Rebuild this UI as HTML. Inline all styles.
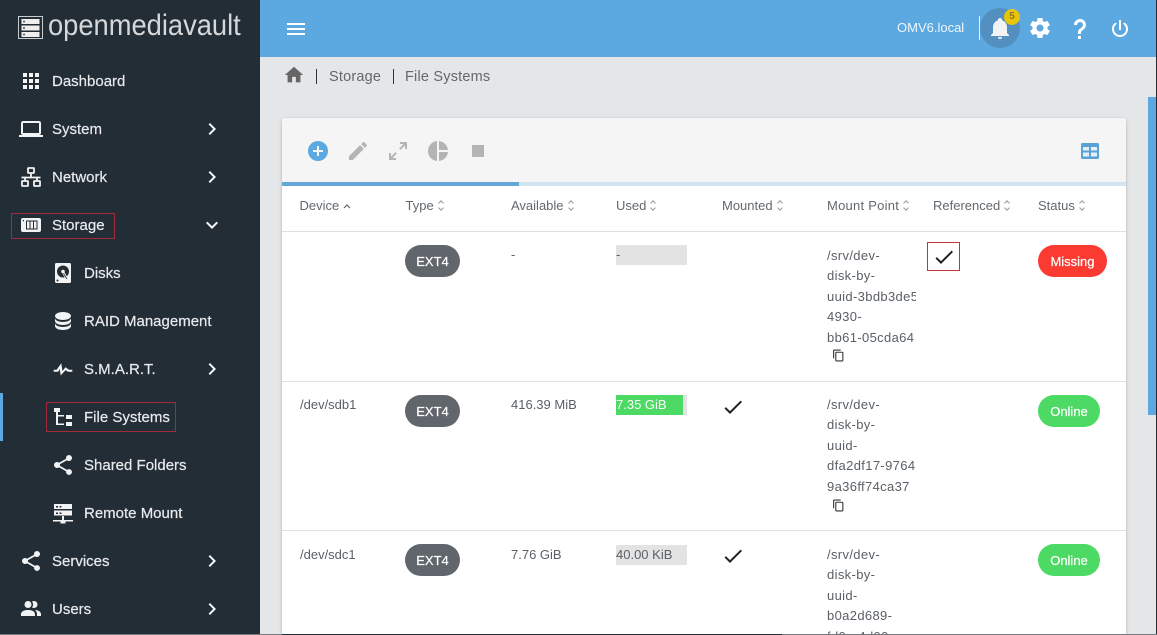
<!DOCTYPE html>
<html><head><meta charset="utf-8"><style>
html,body{margin:0;padding:0;width:1157px;height:635px;overflow:hidden;background:#e4e6e8;font-family:"Liberation Sans",sans-serif}
.a{position:absolute}
#r{position:relative;width:1157px;height:635px;overflow:hidden}
.n{position:absolute;color:#e8eaec;font-size:15px;line-height:20px;margin-top:1px;white-space:nowrap;-webkit-text-stroke:.2px #e8eaec}
svg{position:absolute;display:block}
.w{fill:#f2f3f4}
.g{fill:#b4b4b4}
.h{position:absolute;top:197px;font-size:13px;line-height:18px;color:#62686d;white-space:nowrap}
.h i{display:inline-block;width:6px;height:11px;margin-left:4px;vertical-align:-1px;position:relative}
.h i:before,.h i:after{content:"";position:absolute;left:1px;width:3px;height:3px;border-left:1px solid #999;border-top:1px solid #999}
.h i:before{top:1px;transform:rotate(45deg)}
.h i:after{bottom:1px;transform:rotate(225deg)}
.t{position:absolute;font-size:13px;line-height:20px;color:#5a6066;white-space:nowrap}
.p{position:absolute;height:32px;line-height:33px;border-radius:16px;color:#fff;font-size:13px;text-align:center;-webkit-text-stroke:.2px #fff}
.x{left:405px;width:55px;background:#60666c}
.b{position:absolute;left:616px;width:71px;height:20px;background:#e3e3e3}
.m{position:absolute;left:827px;width:89px;overflow:hidden;font-size:13px;line-height:20.4px;letter-spacing:.35px;color:#5a6066;white-space:nowrap}
.bx{position:absolute;border:1px solid #a32a3a;box-sizing:border-box}
</style></head><body><div id="r">
<div class="a" style="left:0;top:0;width:260px;height:634px;background:#232d36"></div>
<div class="a" style="left:260px;top:0;width:897px;height:57px;background:#5ba9e0"></div>
<div class="a" style="left:0;top:393px;width:3px;height:48px;background:#5ba9e0"></div>

<div class="a" style="left:18px;top:16px;width:25px;height:23px;border:1px solid #c8cccf;box-sizing:border-box"></div>
<svg style="left:18px;top:16px" width="25" height="23"><rect x="3.500" y="3" width="18" height="5" fill="#eee"/><rect x="3.500" y="9.500" width="18" height="5" fill="#eee"/><rect x="3.500" y="16" width="18" height="5" fill="#eee"/><circle cx="6" cy="5.500" r="1" fill="#555"/><circle cx="6" cy="12" r="1" fill="#555"/><circle cx="6" cy="18.500" r="1" fill="#555"/></svg>
<div class="a" style="left:48px;top:10px;font-size:30px;line-height:32px;color:#d5d8da;white-space:nowrap;transform:scaleX(.91);transform-origin:0 0">openmediavault</div>

<svg style="left:19px;top:69px" width="24" height="24" viewBox="0 0 24 24"><path class="w" d="M16,20H20V16H16M16,14H20V10H16M10,8H14V4H10M16,8H20V4H16M10,14H14V10H10M4,14H8V10H4M4,20H8V16H4M10,20H14V16H10M4,8H8V4H4V8Z"/></svg>
<div class="n" style="left:52px;top:71px">Dashboard</div>
<svg style="left:19px;top:117px" width="24" height="24" viewBox="0 0 24 24"><path class="w" d="M4,6H20V16H4M20,18A2,2 0 0,0 22,16V6C22,4.890 21.100,4 20,4H4C2.890,4 2,4.890 2,6V16A2,2 0 0,0 4,18H0V20H24V18H20Z"/></svg>
<div class="n" style="left:52px;top:119px">System</div>
<svg style="left:21px;top:167px" width="20" height="20" viewBox="0 0 20 20" fill="none" stroke="#f2f3f4" stroke-width="1.800"><rect x="7" y="1" width="6" height="5" rx=".5"/><rect x="1" y="14" width="6" height="5" rx=".5"/><rect x="13" y="14" width="6" height="5" rx=".5"/><path d="M10 6V10M0.500 10.500H19.500M4 10.500V14M16 10.500V14"/></svg>
<div class="n" style="left:52px;top:167px">Network</div>
<svg style="left:21px;top:218px" width="20" height="14" viewBox="0 0 20 14"><path class="w" d="M2 0H18A2 2 0 0 1 20 2V12A2 2 0 0 1 18 14H2A2 2 0 0 1 0 12V2A2 2 0 0 1 2 0Z"/><path fill="#232d36" d="M5 2.500H16.500V11.500H5ZM1.800 2H3V3.200H1.800Z"/><path class="w" d="M6 3.500H8.500V10.500H6ZM9.500 3.500H12V10.500H9.500ZM13 3.500H15.500V10.500H13Z"/></svg>
<div class="n" style="left:52px;top:215px">Storage</div>
<svg style="left:55px;top:263px" width="16" height="20" viewBox="0 0 16 20"><rect width="16" height="20" rx="1.500" class="w"/><circle cx="8" cy="8.500" r="6" fill="#232d36"/><circle cx="8" cy="8.500" r="1.800" fill="#f2f3f4"/><path d="M8.500 10L12 16" stroke="#f2f3f4" stroke-width="2.400"/><path d="M8.500 10.500L12 16" stroke="#232d36" stroke-width=".8"/><circle cx="2.500" cy="17.500" r="1" fill="#232d36"/></svg>
<div class="n" style="left:84px;top:263px">Disks</div>
<svg style="left:51px;top:309px" width="24" height="24" viewBox="0 0 24 24"><path class="w" d="M12,3C7.580,3 4,4.790 4,7C4,9.210 7.580,11 12,11C16.420,11 20,9.210 20,7C20,4.790 16.420,3 12,3M4,9V12C4,14.210 7.580,16 12,16C16.420,16 20,14.210 20,12V9C20,11.210 16.420,13 12,13C7.580,13 4,11.210 4,9M4,14V17C4,19.210 7.580,21 12,21C16.420,21 20,19.210 20,17V14C20,16.210 16.420,18 12,18C7.580,18 4,16.210 4,14Z"/></svg>
<div class="n" style="left:84px;top:311px">RAID Management</div>
<svg style="left:51px;top:357px" width="24" height="24" viewBox="0 0 24 24"><path class="w" stroke="#f2f3f4" stroke-width=".6" d="M3,13H5.790L10.100,7L11.280,14.750L14.500,10.660L17.830,13H21V14.500H17L14.670,12.670L9.920,17.730L8.940,11.310L7,14.500H3V13Z"/></svg>
<div class="n" style="left:84px;top:359px">S.M.A.R.T.</div>
<svg style="left:54px;top:408px" width="18" height="18" viewBox="0 0 18 18"><path class="w" d="M0 0H6V4H0ZM12 7H18V11H12ZM12 14H18V18H12Z"/><path class="w" d="M2 4H4V7H10V8.500H4V15.500H10V17H2Z"/></svg>
<div class="n" style="left:84px;top:407px">File Systems</div>
<svg style="left:51px;top:453px" width="24" height="24" viewBox="0 0 24 24"><path class="w" d="M18,16.080C17.240,16.080 16.560,16.380 16.040,16.850L8.910,12.700C8.960,12.470 9,12.240 9,12C9,11.760 8.960,11.530 8.910,11.300L15.960,7.190C16.500,7.690 17.210,8 18,8A3,3 0 0,0 21,5A3,3 0 0,0 18,2A3,3 0 0,0 15,5C15,5.240 15.040,5.470 15.090,5.700L8.040,9.810C7.500,9.310 6.790,9 6,9A3,3 0 0,0 3,12A3,3 0 0,0 6,15C6.790,15 7.500,14.690 8.040,14.190L15.160,18.340C15.110,18.550 15.080,18.770 15.080,19C15.080,20.610 16.390,21.910 18,21.910C19.610,21.910 20.920,20.610 20.920,19A2.920,2.920 0 0,0 18,16.080Z"/></svg>
<div class="n" style="left:84px;top:455px">Shared Folders</div>
<svg style="left:53px;top:504px" width="20" height="20" viewBox="0 0 20 20"><path class="w" d="M1 0H19V5H1ZM1 6.500H19V11.500H1ZM9 12H11V16H20V17.500H12.500V19.500H7.500V17.500H0V16H9Z"/><path fill="#232d36" d="M3 2H5V3.500H3ZM6.500 2H8.500V3.500H6.500ZM3 8.500H5V10H3ZM6.500 8.500H8.500V10H6.500Z"/></svg>
<div class="n" style="left:84px;top:503px">Remote Mount</div>
<svg style="left:19px;top:549px" width="24" height="24" viewBox="0 0 24 24"><path class="w" d="M18,16.080C17.240,16.080 16.560,16.380 16.040,16.850L8.910,12.700C8.960,12.470 9,12.240 9,12C9,11.760 8.960,11.530 8.910,11.300L15.960,7.190C16.500,7.690 17.210,8 18,8A3,3 0 0,0 21,5A3,3 0 0,0 18,2A3,3 0 0,0 15,5C15,5.240 15.040,5.470 15.090,5.700L8.040,9.810C7.500,9.310 6.790,9 6,9A3,3 0 0,0 3,12A3,3 0 0,0 6,15C6.790,15 7.500,14.690 8.040,14.190L15.160,18.340C15.110,18.550 15.080,18.770 15.080,19C15.080,20.610 16.390,21.910 18,21.910C19.610,21.910 20.920,20.610 20.920,19A2.920,2.920 0 0,0 18,16.080Z"/></svg>
<div class="n" style="left:52px;top:551px">Services</div>
<svg style="left:19px;top:597px" width="24" height="24" viewBox="0 0 24 24"><path class="w" d="M16 17V19H2V17S2 13 9 13 16 17 16 17M12.500 7.500A3.500 3.500 0 1 0 9 11A3.500 3.500 0 0 0 12.500 7.500M15.940 13A5.320 5.320 0 0 1 18 17V19H22V17S22 13.370 15.940 13M15 4A3.390 3.390 0 0 0 13.070 4.590A5 5 0 0 1 13.070 10.410A3.390 3.390 0 0 0 15 11A3.500 3.500 0 0 0 15 4Z"/></svg>
<div class="n" style="left:52px;top:599px">Users</div>
<svg style="left:200px;top:117px" width="24" height="24" viewBox="0 0 24 24"><path class="w" d="M8.590,16.580L13.170,12L8.590,7.410L10,6L16,12L10,18L8.590,16.580Z"/></svg>
<svg style="left:200px;top:165px" width="24" height="24" viewBox="0 0 24 24"><path class="w" d="M8.590,16.580L13.170,12L8.590,7.410L10,6L16,12L10,18L8.590,16.580Z"/></svg>
<svg style="left:200px;top:213px" width="24" height="24" viewBox="0 0 24 24"><path class="w" d="M7.410,8.580L12,13.170L16.590,8.580L18,10L12,16L6,10L7.410,8.580Z"/></svg>
<svg style="left:200px;top:357px" width="24" height="24" viewBox="0 0 24 24"><path class="w" d="M8.590,16.580L13.170,12L8.590,7.410L10,6L16,12L10,18L8.590,16.580Z"/></svg>
<svg style="left:200px;top:549px" width="24" height="24" viewBox="0 0 24 24"><path class="w" d="M8.590,16.580L13.170,12L8.590,7.410L10,6L16,12L10,18L8.590,16.580Z"/></svg>
<svg style="left:200px;top:597px" width="24" height="24" viewBox="0 0 24 24"><path class="w" d="M8.590,16.580L13.170,12L8.590,7.410L10,6L16,12L10,18L8.590,16.580Z"/></svg>
<div class="bx" style="left:11px;top:213px;width:104px;height:26px"></div>
<div class="bx" style="left:46px;top:402px;width:130px;height:30px"></div>

<svg style="left:287px;top:23px" width="18" height="13"><path fill="#fff" d="M0 0H18V2H0ZM0 5H18V7H0ZM0 10H18V12H0Z"/></svg>
<div class="a" style="left:897px;top:18px;font-size:13px;line-height:20px;color:#f0f6fb;white-space:nowrap">OMV6.local</div>
<div class="a" style="left:979px;top:16px;width:1px;height:24px;background:#e6f1f9"></div>
<div class="a" style="left:980px;top:8px;width:40px;height:40px;border-radius:50%;background:#5390bf"></div>
<svg style="left:988px;top:16px" width="24" height="24" viewBox="0 0 24 24"><path fill="#f0f2f4" d="M21,19V20H3V19L5,17V11C5,7.900 7.030,5.170 10,4.290C10,4.190 10,4.100 10,4A2,2 0 0,1 12,2A2,2 0 0,1 14,4C14,4.100 14,4.190 14,4.290C16.970,5.170 19,7.900 19,11V17L21,19M14,21A2,2 0 0,1 12,23A2,2 0 0,1 10,21"/></svg>
<div class="a" style="left:1004px;top:9px;width:16px;height:16px;border-radius:50%;background:#e8c40c;color:#8c7a14;font-size:10px;font-weight:bold;line-height:16px;text-align:center">5</div>
<svg style="left:1028px;top:16px" width="24" height="24" viewBox="0 0 24 24"><path fill="#fff" d="M12,15.500A3.500,3.500 0 0,1 8.500,12A3.500,3.500 0 0,1 12,8.500A3.500,3.500 0 0,1 15.500,12A3.500,3.500 0 0,1 12,15.500M19.430,12.970C19.470,12.650 19.500,12.330 19.500,12C19.500,11.670 19.470,11.340 19.430,11L21.540,9.370C21.730,9.220 21.780,8.950 21.660,8.730L19.660,5.270C19.540,5.050 19.270,4.960 19.050,5.050L16.560,6.050C16.040,5.660 15.500,5.320 14.870,5.070L14.500,2.420C14.460,2.180 14.250,2 14,2H10C9.750,2 9.540,2.180 9.500,2.420L9.130,5.070C8.500,5.320 7.960,5.660 7.440,6.050L4.950,5.050C4.730,4.960 4.460,5.050 4.340,5.270L2.340,8.730C2.210,8.950 2.270,9.220 2.460,9.370L4.570,11C4.530,11.340 4.500,11.670 4.500,12C4.500,12.330 4.530,12.650 4.570,12.970L2.460,14.630C2.270,14.780 2.210,15.050 2.340,15.270L4.340,18.730C4.460,18.950 4.730,19.030 4.950,18.950L7.440,17.940C7.960,18.340 8.500,18.680 9.130,18.930L9.500,21.580C9.540,21.820 9.750,22 10,22H14C14.250,22 14.460,21.820 14.500,21.580L14.870,18.930C15.500,18.670 16.040,18.340 16.560,17.940L19.050,18.950C19.270,19.030 19.540,18.950 19.660,18.730L21.660,15.270C21.780,15.050 21.730,14.780 21.540,14.630L19.430,12.970Z"/></svg>
<svg style="left:1068px;top:17px" width="24" height="24" viewBox="0 0 24 24"><path fill="#fff" d="M10,19H13V22H10V19M12,2C17.350,2.220 19.680,7.620 16.500,11.670C15.670,12.670 14.330,13.330 13.670,14.170C13,15 13,16 13,17H10C10,15.330 10,13.920 10.670,12.920C11.330,11.920 12.670,11.330 13.500,10.670C15.920,8.430 15.320,5.260 12,5A3,3 0 0,0 9,8H6A6,6 0 0,1 12,2Z"/></svg>
<svg style="left:1108px;top:17px" width="24" height="24" viewBox="0 0 24 24"><path fill="#fff" d="M16.560,5.440L15.110,6.890C16.840,7.940 18,9.830 18,12A6,6 0 0,1 12,18A6,6 0 0,1 6,12C6,9.830 7.160,7.940 8.880,6.880L7.440,5.440C5.360,6.880 4,9.280 4,12A8,8 0 0,0 12,20A8,8 0 0,0 20,12C20,9.280 18.640,6.880 16.560,5.440M13,3H11V13H13"/></svg>

<svg style="left:283px;top:64px" width="22" height="22" viewBox="0 0 24 24"><path fill="#666" d="M10,20V14H14V20H19V12H22L12,3L2,12H5V20H10Z"/></svg>
<div class="a" style="left:316px;top:69px;width:1px;height:15px;background:#333"></div>
<div class="a" style="left:393px;top:69px;width:1px;height:15px;background:#333"></div>
<div class="a" style="left:329px;top:67px;font-size:14.5px;line-height:20px;color:#62686d;letter-spacing:.2px;white-space:nowrap">Storage</div>
<div class="a" style="left:405px;top:67px;font-size:14.5px;line-height:20px;color:#62686d;letter-spacing:.2px;white-space:nowrap">File Systems</div>

<div class="a" style="left:1148px;top:97px;width:8px;height:318px;background:#5ba9e0"></div>
<div class="a" style="left:1156px;top:0;width:1px;height:635px;background:#232d36"></div>

<div class="a" style="left:282px;top:118px;width:844px;height:516px;background:#fff;border-radius:3px 3px 0 0;box-shadow:0 1px 3px rgba(0,0,0,.25)"></div>
<div class="a" style="left:282px;top:118px;width:844px;height:64px;background:#f5f5f5;border-radius:3px 3px 0 0"></div>
<div class="a" style="left:282px;top:182px;width:844px;height:4px;background:#d3e4f1"></div>
<div class="a" style="left:282px;top:182px;width:237px;height:4px;background:#64a6d4"></div>

<svg style="left:306px;top:139px" width="24" height="24" viewBox="0 0 24 24"><path fill="#5ba9e0" d="M17,13H13V17H11V13H7V11H11V7H13V11H17M12,2A10,10 0 0,0 2,12A10,10 0 0,0 12,22A10,10 0 0,0 22,12A10,10 0 0,0 12,2Z"/></svg>
<svg style="left:346px;top:139px" width="24" height="24" viewBox="0 0 24 24"><path class="g" d="M20.710,7.040C21.100,6.650 21.100,6 20.710,5.630L18.370,3.290C18,2.900 17.350,2.900 16.960,3.290L15.120,5.120L18.870,8.870M3,17.250V21H6.750L17.810,9.930L14.060,6.180L3,17.250Z"/></svg>
<svg style="left:386px;top:139px" width="24" height="24" viewBox="0 0 24 24"><path class="g" d="M10,21V19H6.410L10.910,14.500L9.500,13.090L5,17.590V14H3V21H10M14.500,10.910L19,6.410V10H21V3H14V5H17.590L13.090,9.500L14.500,10.910Z"/></svg>
<svg style="left:426px;top:139px" width="24" height="24" viewBox="0 0 24 24"><path class="g" d="M11,2V22C5.900,21.500 2,17.200 2,12C2,6.800 5.900,2.500 11,2M13,2V11H22C21.500,6.200 17.800,2.500 13,2M13,13V22C17.700,21.500 21.500,17.800 22,13H13Z"/></svg>
<svg style="left:466px;top:139px" width="24" height="24" viewBox="0 0 24 24"><path class="g" d="M18,18H6V6H18V18Z"/></svg>
<svg style="left:1080px;top:143px" width="20" height="16" viewBox="0 0 20 16"><rect x="1" y="0" width="18" height="16" rx="1.500" fill="#5ba2d4"/><path fill="#e3f0f9" d="M3 4H9V7.500H3ZM11 4H17V7.500H11ZM3 9.500H9V13.500H3ZM11 9.500H17V13.500H11Z"/></svg>

<div class="h" style="left:299.500px">Device <svg style="position:static;display:inline;vertical-align:1px" width="8" height="6"><path d="M1 5L4 2L7 5" fill="none" stroke="#666" stroke-width="1.200"/></svg></div>
<div class="h" style="left:405.500px">Type<i></i></div>
<div class="h" style="left:511px">Available<i></i></div>
<div class="h" style="left:616px">Used<i></i></div>
<div class="h" style="left:722px">Mounted<i></i></div>
<div class="h" style="left:827px;letter-spacing:.25px">Mount Point<i></i></div>
<div class="h" style="left:933px">Referenced<i></i></div>
<div class="h" style="left:1038px">Status<i></i></div>

<div class="a" style="left:282px;top:231px;width:844px;height:1px;background:#dedfe0"></div>
<div class="a" style="left:282px;top:381px;width:844px;height:1px;background:#dedfe0"></div>
<div class="a" style="left:282px;top:530px;width:844px;height:1px;background:#dedfe0"></div>

<div class="p x" style="top:245px">EXT4</div>
<div class="t" style="left:511px;top:245px">-</div>
<div class="b" style="top:245px"></div><div class="t" style="left:616px;top:245px">-</div>
<div class="m" style="top:246px;height:102px">/srv/dev-<br>disk-by-<br>uuid-3bdb3de5-<br>4930-<br>bb61-05cda64</div>
<svg style="left:832px;top:349px" width="13" height="13" viewBox="0 0 24 24"><path fill="#333" d="M19,21H8V7H19M19,5H8A2,2 0 0,0 6,7V21A2,2 0 0,0 8,23H19A2,2 0 0,0 21,21V7A2,2 0 0,0 19,5M16,1H4A2,2 0 0,0 2,3V17H4V3H16V1Z"/></svg>
<svg style="left:932px;top:245px" width="24" height="24" viewBox="0 0 24 24"><path fill="#222" d="M21,7L9,19L3.500,13.500L4.910,12.090L9,16.170L19.590,5.590L21,7Z"/></svg>
<div class="bx" style="left:927px;top:242px;width:33px;height:29px;border-color:#c8323c"></div>
<div class="p" style="left:1038px;top:245px;width:69px;background:#fb3a32">Missing</div>

<div class="t" style="left:300px;top:395px">/dev/sdb1</div>
<div class="p x" style="top:395px">EXT4</div>
<div class="t" style="left:511px;top:395px">416.39 MiB</div>
<div class="b" style="top:395px"></div><div class="a" style="left:616px;top:395px;width:67px;height:20px;background:#4cd964"></div><div class="t" style="left:616px;top:395px;color:#fff">7.35 GiB</div>
<svg style="left:721px;top:395px" width="24" height="24" viewBox="0 0 24 24"><path fill="#222" d="M21,7L9,19L3.500,13.500L4.910,12.090L9,16.170L19.590,5.590L21,7Z"/></svg>
<div class="m" style="top:395px;height:102px">/srv/dev-<br>disk-by-<br>uuid-<br>dfa2df17-9764<br>9a36ff74ca37</div>
<svg style="left:832px;top:499px" width="13" height="13" viewBox="0 0 24 24"><path fill="#333" d="M19,21H8V7H19M19,5H8A2,2 0 0,0 6,7V21A2,2 0 0,0 8,23H19A2,2 0 0,0 21,21V7A2,2 0 0,0 19,5M16,1H4A2,2 0 0,0 2,3V17H4V3H16V1Z"/></svg>
<div class="p" style="left:1038px;top:395px;width:62px;background:#4cd964">Online</div>

<div class="t" style="left:300px;top:545px">/dev/sdc1</div>
<div class="p x" style="top:544px">EXT4</div>
<div class="t" style="left:511px;top:545px">7.76 GiB</div>
<div class="b" style="top:545px"></div><div class="t" style="left:616px;top:545px">40.00 KiB</div>
<svg style="left:721px;top:544px" width="24" height="24" viewBox="0 0 24 24"><path fill="#222" d="M21,7L9,19L3.500,13.500L4.910,12.090L9,16.170L19.590,5.590L21,7Z"/></svg>
<div class="m" style="top:545px;height:89px">/srv/dev-<br>disk-by-<br>uuid-<br>b0a2d689-<br>fd0a-4d00</div>
<div class="p" style="left:1038px;top:544px;width:62px;background:#4cd964">Online</div>

<div class="a" style="left:0;top:634px;width:282px;height:1px;background:#77797b"></div>
<div class="a" style="left:282px;top:634px;width:500px;height:1px;background:#232d36"></div>
<div class="a" style="left:782px;top:634px;width:375px;height:1px;background:#77797b"></div>
</div></body></html>
